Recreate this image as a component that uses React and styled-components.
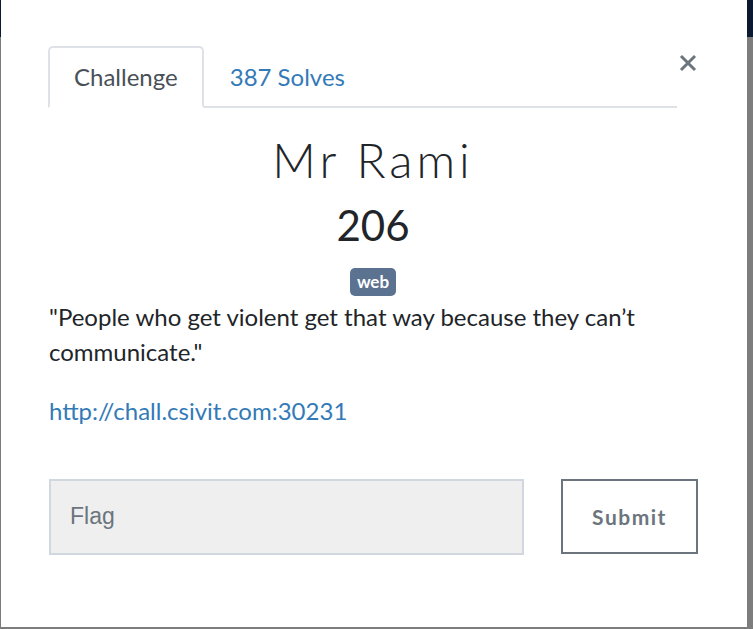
import React from "react";
import styled, { createGlobalStyle } from "styled-components";

const Global = createGlobalStyle`
  html, body { margin: 0; padding: 0; }
  body {
    overflow: hidden;
    font-family: Lato, "Noto Sans", sans-serif;
  }
`;

const Backdrop = styled.div`
  height: 629px;
  padding: 0 6px 2px 1px;
  box-sizing: border-box;
  display: flex;
  background: linear-gradient(to bottom, #0b1a2f 0, #0b1a2f 37px, #7d7d7d 37px);
`;

const Modal = styled.div`
  flex: 1;
  min-width: 0;
  background: #fff;
  padding: 46px 49px 0 47px;
  box-sizing: border-box;
  display: flex;
  flex-direction: column;
`;

const Header = styled.div`
  display: flex;
  align-items: flex-start;
`;

const Tabs = styled.div`
  flex: 1;
  display: flex;
  border-bottom: 2px solid #dee2e6;
  height: 62px;
  box-sizing: border-box;
`;

const Tab = styled.div`
  padding: 0 24px;
  display: flex;
  align-items: center;
  font-size: 24px;
  line-height: 1;
  color: ${(p) => (p.$active ? "#495057" : "#337ab7")};
  border: 2px solid ${(p) => (p.$active ? "#dee2e6" : "transparent")};
  border-bottom-color: ${(p) => (p.$active ? "#fff" : "transparent")};
  border-radius: 5px 5px 0 0;
  margin-bottom: -2px;
  height: 62px;
  box-sizing: border-box;
`;

const Close = styled.button`
  background: none;
  border: none;
  padding: 0;
  margin: 7px 0 0 1px;
  width: 20px;
  height: 20px;
  display: flex;
  align-items: center;
  justify-content: center;
`;

const Title = styled.h3`
  margin: 23px 0 0;
  text-align: center;
  font-weight: 300;
  font-size: 48px;
  letter-spacing: 4px;
  line-height: 1.2;
  color: #212529;
`;

const Value = styled.h4`
  margin: 11px 0 0;
  text-align: center;
  font-weight: 400;
  font-size: 42px;
  line-height: 1.2;
  color: #212529;
`;

const BadgeRow = styled.div`
  display: flex;
  justify-content: center;
  margin-top: 18px;
`;

const Badge = styled.span`
  background: #5b7290;
  color: #fff;
  font-weight: 700;
  font-size: 17px;
  line-height: 28px;
  padding: 0 7px;
  border-radius: 5px;
`;

const Description = styled.p`
  margin: 3px 0 0 1px;
  font-size: 24px;
  line-height: 35px;
  color: #212529;
`;

const Link = styled.a`
  display: block;
  margin: 24px 0 0 1px;
  font-size: 24px;
  line-height: 35px;
  color: #337ab7;
  text-decoration: none;
`;

const Form = styled.form`
  display: flex;
  gap: 37px;
  margin: 51px 0 0 1px;
`;

const Input = styled.input`
  flex: 1;
  min-width: 0;
  height: 76px;
  box-sizing: border-box;
  background: #efefef;
  border: 2px solid #d1d7de;
  padding: 0 19px;
  font-family: "Liberation Sans", Arial, sans-serif;
  font-size: 23px;
  color: #495057;
  outline: none;
  &::placeholder { color: #6c757d; }
`;

const Submit = styled.button`
  flex: 0 0 137px;
  height: 75px;
  box-sizing: border-box;
  background: #fff;
  border: 2px solid #6c757d;
  color: #6c757d;
  font-family: Lato, sans-serif;
  font-weight: 700;
  font-size: 21px;
  letter-spacing: 1.5px;
`;

export default function App() {
  return (
    <>
      <Global />
      <Backdrop>
        <Modal>
          <Header>
            <Tabs>
              <Tab $active>Challenge</Tab>
              <Tab>387 Solves</Tab>
            </Tabs>
            <Close aria-label="Close">
              <svg width="18" height="18" viewBox="0 0 18 18">
                <path d="M2 2 L16 16 M16 2 L2 16" stroke="#6c757d" strokeWidth="3" />
              </svg>
            </Close>
          </Header>
          <Title>Mr Rami</Title>
          <Value>206</Value>
          <BadgeRow>
            <Badge>web</Badge>
          </BadgeRow>
          <Description>
            "People who get violent get that way because they can’t communicate."
          </Description>
          <Link href="#">http://chall.csivit.com:30231</Link>
          <Form onSubmit={(e) => e.preventDefault()}>
            <Input placeholder="Flag" />
            <Submit type="submit">Submit</Submit>
          </Form>
        </Modal>
      </Backdrop>
    </>
  );
}
